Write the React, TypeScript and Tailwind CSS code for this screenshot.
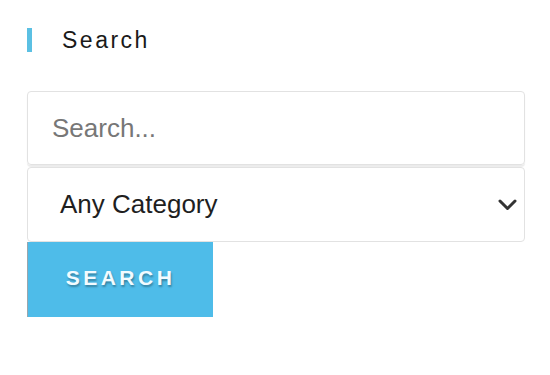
const App = () => {
  return (
    <div className="w-[550px] h-[375px] bg-white pl-[27px] pt-[28px] font-['Liberation_Sans',Arial,sans-serif]">
      {/* Widget Title */}
      <div className="flex items-center h-[24px]">
        <span className="w-[5px] h-[24px] bg-[#5bc0e3]" />
        <h3 className="ml-[30px] text-[23px] leading-none tracking-[2.5px] text-[#1a1a1a]">Search</h3>
      </div>

      {/* Search Form */}
      <form className="mt-[39px] w-[498px] flex flex-col">
        <input
          type="text"
          placeholder="Search..."
          className="h-[74px] w-full rounded-[4px] border border-[#e2e2e2] shadow-[0_2px_1px_rgba(0,0,0,0.08)] px-[24px] text-[26px] text-[#222] placeholder:text-[#777] outline-none"
        />
        <div className="relative mt-[2px]">
          <div className="h-[75px] w-full rounded-[4px] border border-[#e2e2e2] flex items-center pl-[32px] text-[26px] text-[#1f1f1f]">
            Any Category
          </div>
          <svg
            className="absolute right-[8px] top-[32px] w-[19px] h-[12px]"
            viewBox="0 0 19 12"
            fill="none"
            stroke="#333"
            strokeWidth={3}
            strokeLinecap="round"
            strokeLinejoin="round"
          >
            <polyline points="2,2 9.5,9.5 17,2" />
          </svg>
        </div>
        <button
          type="button"
          className="w-[186px] h-[75px] pb-[3px] bg-[#4ebce9] border-l border-[#9aa6ad] text-[#f2fbff] font-bold text-[21px] tracking-[3.5px] [text-shadow:1px_2px_2px_rgba(0,0,0,0.3)]"
        >
          SEARCH
        </button>
      </form>
    </div>
  );
};

export default App;
